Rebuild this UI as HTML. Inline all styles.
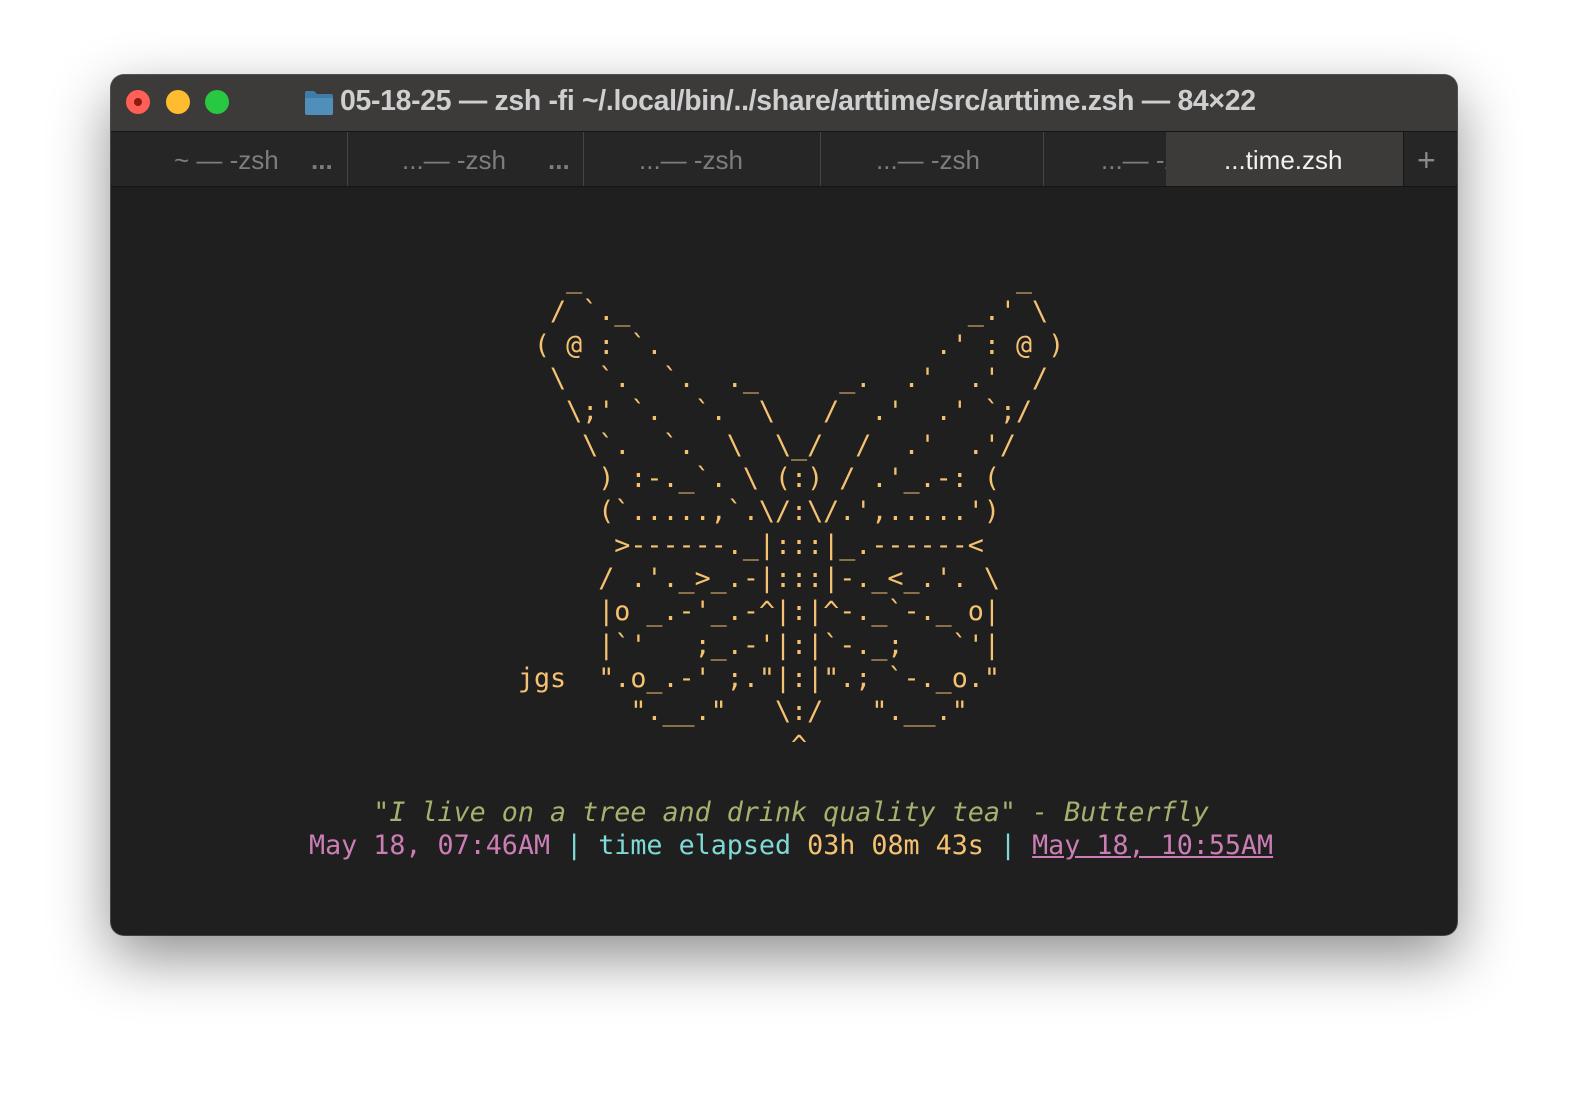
<!DOCTYPE html>
<html><head><meta charset="utf-8"><style>
html,body{margin:0;padding:0;width:1588px;height:1096px;background:#fff;overflow:hidden}
.win{position:absolute;left:111px;top:75px;width:1346px;height:860px;border-radius:13px;background:#1f1f1f;overflow:hidden;box-shadow:0 22px 60px rgba(0,0,0,.45),0 0 0 1px #5a5a5a}
.title{position:absolute;left:0;top:0;width:100%;height:56px;background:#3c3b3a}
.dot{position:absolute;top:15px;width:24px;height:24px;border-radius:50%}
.tt{position:absolute;left:229px;top:10px;font:bold 28.4px "Liberation Sans",sans-serif;color:#cfcfcf;white-space:nowrap;letter-spacing:-0.3px}
.tabs{position:absolute;left:0;top:56px;width:100%;height:54px;background:#262626;border-top:1px solid #151515;border-bottom:1px solid #151515}
.tab{position:absolute;top:2px;height:54px;font:26px "Liberation Sans",sans-serif;color:#7d7d7d;line-height:52px;white-space:nowrap}
.sep{position:absolute;top:0;width:1px;height:54px;background:#444}
pre{position:absolute;margin:0;font:26.7px/33.35px "DejaVu Sans Mono","Liberation Mono",monospace;color:#f6c271;white-space:pre}
.q{color:#a5b26f;font-style:italic}
.p{color:#cc7db5}.c{color:#7fd9d6}.o{color:#f6c271}
</style></head><body>
<div class="win">
 <div class="title">
  <div class="dot" style="left:15px;background:#fe5f57"><div style="position:absolute;left:8px;top:8px;width:8px;height:8px;border-radius:50%;background:#8b1a12"></div></div>
  <div class="dot" style="left:55px;background:#febc2e"></div>
  <div class="dot" style="left:94px;background:#28c840"></div>
  <svg style="position:absolute;left:193px;top:15px" width="30" height="26" viewBox="0 0 30 26"><path d="M1 3 Q1 1 3 1 H10 L13 4 H27 Q29 4 29 6 V23 Q29 25 27 25 H3 Q1 25 1 23 Z" fill="#3f7ca8"/><path d="M1 8 H29 V23 Q29 25 27 25 H3 Q1 25 1 23 Z" fill="#4f8fba"/></svg>
  <div class="tt">05-18-25 — zsh -fi ~/.local/bin/../share/arttime/src/arttime.zsh — 84×22</div>
 </div>
 <div class="tabs">
  <div class="tab" style="left:63px">~ — -zsh</div><div class="tab" style="left:200px;font-weight:bold">...</div>
  <div class="sep" style="left:236px"></div>
  <div class="tab" style="left:291px">...— -zsh</div><div class="tab" style="left:437px;font-weight:bold">...</div>
  <div class="sep" style="left:472px"></div>
  <div class="tab" style="left:528px">...— -zsh</div>
  <div class="sep" style="left:709px"></div>
  <div class="tab" style="left:765px">...— -zsh</div>
  <div class="sep" style="left:932px"></div>
  <div class="tab" style="left:990px">...— -zsh</div>
  <div style="position:absolute;left:1055px;top:0;width:237px;height:54px;background:#3c3b3a"></div>
  <div class="tab" style="left:1113px;color:#f2f2f2">...time.zsh</div>
  <div class="sep" style="left:1292px;background:#151515"></div>
  <div class="tab" style="left:1306px;font-size:32px;color:#8a8a8a">+</div>
 </div>
</div>
<pre style="left:309px;top:262px">                _                           _
               / `._                     _.' \
              ( @ : `.                 .' : @ )
               \  `.  `.  ._     _.  .'  .'  /
                \;' `.  `.  \   /  .'  .' `;/
                 \`.  `.  \  \_/  /  .'  .'/
                  ) :-._`. \ (:) / .'_.-: (
                  (`.....,`.\/:\/.',.....')
                   >------._|:::|_.------<
                  / .'._>_.-|:::|-._<_.'. \
                  |o _.-'_.-^|:|^-._`-._ o|
                  |`'   ;_.-'|:|`-._;   `'|
             jgs  ".o_.-' ;."|:|".; `-._o."
                    ".__."   \:/   ".__."
                              ^</pre>
<pre style="left:309px;top:796px"><span class="q">    "I live on a tree and drink quality tea" - Butterfly</span>
<span class="p">May 18, 07:46AM</span> <span class="c">| time elapsed</span> <span class="o">03h 08m 43s</span> <span class="c">|</span> <span class="p" style="text-decoration:underline">May 18, 10:55AM</span></pre>
</body></html>
